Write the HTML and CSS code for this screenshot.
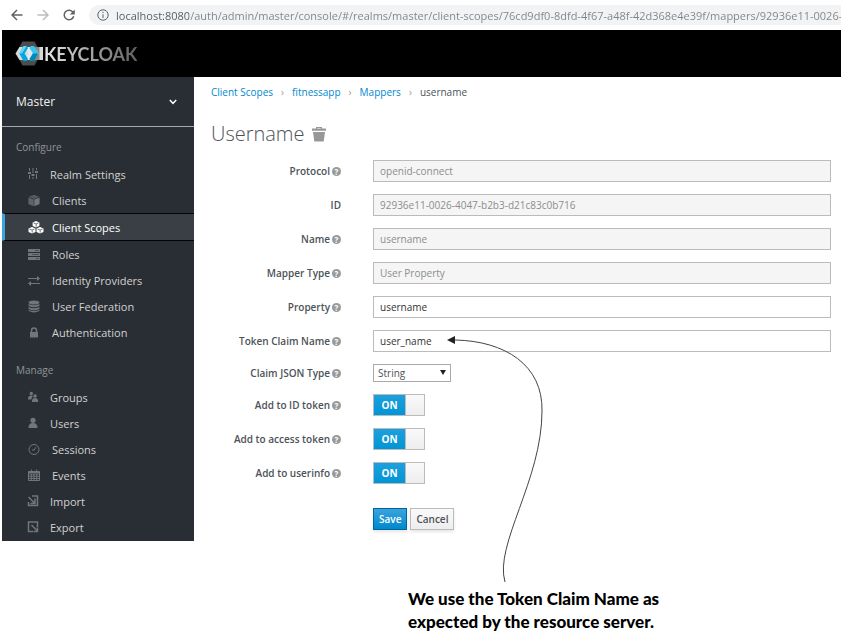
FILE: index.html
```html
<!DOCTYPE html>
<html lang="en">
  <head>
    <meta charset="UTF-8" />
    <meta name="viewport" content="width=device-width, initial-scale=1.0" />
    <title>Keycloak Admin Console</title>
    <link rel="stylesheet" href="styles.css" />
  </head>
  <body>
    <figure class="figure">
      <div class="browser-bar">
        <button class="nav-btn" type="button" aria-label="Back">
          <svg width="12" height="12" viewBox="0 0 12 12"><path d="M11.5 6H1.2M6 1L1 6l5 5" /></svg>
        </button>
        <button class="nav-btn muted" type="button" aria-label="Forward">
          <svg width="12" height="12" viewBox="0 0 12 12"><path d="M.5 6h10.3M6 1l5 5-5 5" /></svg>
        </button>
        <button class="nav-btn" type="button" aria-label="Reload">
          <svg width="12" height="12" viewBox="0 0 12 12"><path d="M10 3.2A4.8 4.8 0 1 0 10.7 7.2" /><path class="solid" d="M11.8.4v5H6.8z" /></svg>
        </button>
        <label class="address">
          <svg width="12" height="12" viewBox="0 0 12 12"><circle cx="6" cy="6" r="5.2" /><path d="M6 5.3V9M6 2.8v1.3" /></svg>
          <input class="url" type="text" aria-label="Address" readonly value="localhost:8080/auth/admin/master/console/#/realms/master/client-scopes/76cd9df0-8dfd-4f67-a48f-42d368e4e39f/mappers/92936e11-0026-4047-b2b3-d21c83c0b716" />
        </label>
      </div>

      <header class="masthead">
        <a class="brand" href="#">
          <svg width="29" height="25" viewBox="0 0 29 25">
            <path fill="#4d4d4d" d="M7.5.5h12l6.5 12-6.5 12h-12L1 12.5z" />
            <path fill="#d8d8d8" d="M4.5 6H28v13H4.5L.5 12.5z" />
            <path fill="#8a8a8a" d="M19 6h5.5v13H19l4.5-6.5z" />
            <path fill="#e6e6e6" d="M9.5 6h8l3.5 6.5-3.5 6.5h-8l3.5-6.5z" />
            <path fill="#00a8e1" d="M8.5 5h3.2l1.3 2-3.4 5.5L13 18l-1.300 2H8.500l-4.200-7.500z" />
            <path fill="#5fd5f7" d="M8.5 5h3.2L7 12.500H4.300z" />
            <path fill="#33c6f4" d="M19 5h-3.200l-1.300 2 3.400 5.500-3.400 5.500 1.300 2H19l4.200-7.500z" />
            <path fill="#0088b8" d="M17.900 12.500h5.300L19 20h-3.200l-1.300-2z" />
          </svg>
          <span class="brand-name">KEYCLOAK</span>
        </a>
      </header>

      <div class="console">
        <nav class="sidebar">
          <button class="realm" type="button">
            Master
            <svg width="8" height="6" viewBox="0 0 8 6"><path d="M.8 1L4 4.3 7.2 1" /></svg>
          </button>

          <h2>Configure</h2>
          <ul>
            <li>
              <a href="#">
                <svg class="pf" viewBox="0 0 10 12"><path d="M1 0h1v3H1zM0 4h3v2H0zM1 7h1v4H1zM4.5 0h1v5h-1zM3.500 6h3v2h-3zM4.500 9h1v2h-1zM8 0h1v2H8zM7 3h3v2H7zM8 6h1v5H8z" /></svg>
                Realm Settings
              </a>
            </li>
            <li>
              <a href="#">
                <svg viewBox="0 0 12 12"><path d="M6 .8l5.500 2L6 5 .5 2.800z" opacity=".6" /><path d="M.4 3.500l5.300 2.100v6.600L.4 9.900z" opacity=".75" /><path d="M11.600 3.500L6.300 5.600v6.600l5.300-2.300z" /></svg>
                Clients
              </a>
            </li>
            <li class="active">
              <a href="#">
                <svg viewBox="0 0 12 12"><path d="M8 0l3.400 1.400v3.500L8 6.500 4.600 4.900V1.400zM4 6l3.500 1.500v3.400L4 12.500.5 10.900V7.500zM12 6l3.500 1.500v3.400L12 12.500l-3.500-1.600V7.500z" /><path class="cube-lines" d="M5.500 1.900L8 3l2.500-1.100M8.200 3.200v2.500M1.500 8L4 9l2.500-1M4.200 9.200v2.500M9.500 8l2.500 1 2.500-1M12.200 9.200v2.500" /></svg>
                Client Scopes
              </a>
            </li>
            <li>
              <a href="#">
                <svg viewBox="0 0 12 12"><path d="M0 1h12v3H0zM0 5h12v3H0zM0 9h12v3H0z" /><path class="cut" d="M7 2.500h4M4 6.500h7M8 10.500h3" /></svg>
                Roles
              </a>
            </li>
            <li>
              <a href="#">
                <svg viewBox="0 0 12 12"><path d="M0 4h9V2l3 2.500L9 7V5H0zM12 9H3V7L0 9.500 3 12v-2h9z" /></svg>
                Identity Providers
              </a>
            </li>
            <li>
              <a href="#">
                <svg viewBox="0 0 12 12"><ellipse cx="6" cy="2.500" rx="5.500" ry="2" /><path d="M.5 4q5.500 2.400 11 0v1.800q-5.500 3-11 0zM.5 6.900q5.500 2.600 11 0v1.800q-5.500 3-11 0zM.5 9.800q5.500 2.600 11 0v1q-5.500 3.200-11 0z" /></svg>
                User Federation
              </a>
            </li>
            <li>
              <a href="#">
                <svg viewBox="0 0 12 12"><path fill-rule="evenodd" d="M2 6h.8V4.500a3.200 3.200 0 0 1 6.400 0V6h.8v5.500H2zM4.300 6h3.400V4.500a1.700 1.700 0 0 0-3.400 0z" /></svg>
                Authentication
              </a>
            </li>
          </ul>

          <h2>Manage</h2>
          <ul>
            <li>
              <a href="#">
                <svg class="pf" viewBox="0 0 10 12"><circle cx="3.300" cy="2.500" r="1.700" /><path d="M0 8.500q0-4 3-4 1.800 0 1.800 1.200Q3.300 6.600 3.300 8.500z" /><circle cx="7" cy="5" r="1.800" /><path d="M3.800 11q0-4 3.200-4t3.200 4z" /></svg>
                Groups
              </a>
            </li>
            <li>
              <a href="#">
                <svg class="pf" viewBox="0 0 10 12"><circle cx="5" cy="3.300" r="2.600" /><path d="M.5 11q0-5 4.500-5t4.500 5z" /></svg>
                Users
              </a>
            </li>
            <li>
              <a href="#">
                <svg class="line" viewBox="0 0 12 12"><circle cx="6" cy="6.500" r="5" /><path d="M7.800 4.300L6.200 7H4" /></svg>
                Sessions
              </a>
            </li>
            <li>
              <a href="#">
                <svg class="line" viewBox="0 0 12 12"><path d="M.5 2.500h11v9H.5zM.5 5h11M.5 7.200h11M.5 9.400h11M3.300 5v6.500M6 5v6.500M8.700 5v6.500M3.300.5v3M8.700.5v3M1 3.500h10" /></svg>
                Events
              </a>
            </li>
            <li>
              <a href="#">
                <svg class="pf line bold" viewBox="0 0 10 12"><path d="M4 1h5.500v9.500H.5V7M.5 2l5.500 5.500M7 3.500v5H2.500" /></svg>
                Import
              </a>
            </li>
            <li>
              <a href="#">
                <svg class="pf line bold" viewBox="0 0 10 12"><path d="M5 10.500H.5V1h9v5M3.500 4L9 9.500M9.500 6.500v4h-4" /></svg>
                Export
              </a>
            </li>
          </ul>
        </nav>

        <main class="content">
          <ol class="breadcrumb">
            <li><a href="#">Client Scopes</a></li>
            <li><a href="#">fitnessapp</a></li>
            <li><a href="#">Mappers</a></li>
            <li>username</li>
          </ol>

          <h1>
            Username
            <button class="trash" type="button" aria-label="Delete">
              <svg width="14" height="16" viewBox="0 0 14 16"><path fill-rule="evenodd" d="M4 1h6v1.500h4v2.300H0V2.500h4zM5.200 2v.5h3.600V2z" /><path d="M1 6h12l-1.300 9.500H2.300z" /></svg>
            </button>
          </h1>

          <form class="mapper-form">
            <div class="row">
              <label for="protocol">Protocol <span class="help"></span></label>
              <input id="protocol" type="text" value="openid-connect" disabled />
            </div>
            <div class="row">
              <label for="mapper-id">ID</label>
              <input id="mapper-id" type="text" value="92936e11-0026-4047-b2b3-d21c83c0b716" disabled />
            </div>
            <div class="row">
              <label for="name">Name <span class="help"></span></label>
              <input id="name" type="text" value="username" disabled />
            </div>
            <div class="row">
              <label for="mapper-type">Mapper Type <span class="help"></span></label>
              <input id="mapper-type" type="text" value="User Property" disabled />
            </div>
            <div class="row">
              <label for="property">Property <span class="help"></span></label>
              <input id="property" type="text" value="username" />
            </div>
            <div class="row">
              <label for="claim-name">Token Claim Name <span class="help"></span></label>
              <input id="claim-name" type="text" value="user_name" />
            </div>
            <div class="row">
              <label for="claim-type">Claim JSON Type <span class="help"></span></label>
              <div class="select">
                <select id="claim-type">
                  <option>String</option>
                </select>
              </div>
            </div>
            <div class="row">
              <label for="id-token">Add to ID token <span class="help"></span></label>
              <div class="onoff">
                <input id="id-token" type="checkbox" checked />
                <span class="on">ON</span>
              </div>
            </div>
            <div class="row">
              <label for="access-token">Add to access token <span class="help"></span></label>
              <div class="onoff">
                <input id="access-token" type="checkbox" checked />
                <span class="on">ON</span>
              </div>
            </div>
            <div class="row">
              <label for="userinfo">Add to userinfo <span class="help"></span></label>
              <div class="onoff">
                <input id="userinfo" type="checkbox" checked />
                <span class="on">ON</span>
              </div>
            </div>
            <div class="actions">
              <button class="btn primary" type="submit">Save</button>
              <button class="btn" type="button">Cancel</button>
            </div>
          </form>
        </main>
      </div>

      <!-- Callout arrow from the caption to the claim name field -->
      <svg class="callout-arrow" width="100" height="250" viewBox="0 0 100 250">
        <path class="curve" d="M59 248C48 211 96 146 96 77C97 31 59 7 9 6" />
        <path d="M1 6l8-4v8z" />
      </svg>

      <figcaption>
        We use the Token Claim Name as<br />
        expected by the resource server.
      </figcaption>
    </figure>
  </body>
</html>
```
FILE: styles.css
```css
* {
  margin: 0;
  padding: 0;
  box-sizing: border-box;
}
body {
  background-color: #fff;
  color: #4d5258;
  font-family: "Open Sans", "Noto Sans", sans-serif;
  font-size: 10px;
}
button,
input,
select {
  font: inherit;
  color: inherit;
}
a {
  text-decoration: none;
}
ul,
ol {
  list-style: none;
}
.figure {
  position: relative;
  padding: 0 12px 0 2px;
}

/* browser toolbar */
.browser-bar {
  display: flex;
  align-items: center;
  height: 30px;
  padding-left: 9px;
  gap: 14px;
}
.nav-btn {
  display: flex;
  border: none;
  background: none;
}
.nav-btn svg,
.address svg {
  fill: none;
  stroke: #5f6368;
  stroke-width: 1.5;
}
.nav-btn .solid {
  fill: #5f6368;
  stroke: none;
}
.nav-btn.muted svg {
  stroke: #bbbdbf;
}
.address {
  flex: 1;
  min-width: 0;
  display: flex;
  align-items: center;
  gap: 7px;
  height: 20px;
  padding-left: 8px;
  border-radius: 10px 0 0 10px;
  background-color: #f1f3f4;
}
.address svg {
  flex: none;
  stroke-width: 1;
}
.url {
  flex: 1;
  min-width: 0;
  border: none;
  outline: none;
  font-size: 11px;
  color: transparent;
  background: linear-gradient(90deg, #55585c 73px, #808285 73px);
  background-clip: text;
  -webkit-background-clip: text;
}

.masthead {
  display: flex;
  align-items: center;
  height: 47px;
  padding-left: 13px;
  background-color: #000;
}
.brand {
  display: flex;
  align-items: center;
}
.brand-name {
  font-family: Lato, sans-serif;
  font-size: 18px;
  font-weight: bold;
  color: transparent;
  background: linear-gradient(90deg, #e8e8e8, #606060);
  background-clip: text;
  -webkit-background-clip: text;
}

.console {
  display: flex;
}
.sidebar {
  width: 192px;
  padding-bottom: 1px;
  background-color: #292e34;
  color: #d1d1d1;
  font-size: 11px;
}
.realm {
  display: flex;
  align-items: center;
  justify-content: space-between;
  width: 100%;
  height: 50px;
  padding: 0 17px 0 14px;
  border: none;
  border-bottom: 1px solid #a5a7aa;
  background: none;
  color: #f1f1f1;
  font-size: 12px;
}
.realm svg {
  fill: none;
  stroke: #fff;
  stroke-width: 1.5;
}
.sidebar h2 {
  padding: 10px 14px 4px;
  color: #8f9499;
  font-size: 10px;
  font-weight: normal;
  line-height: 20px;
}
.sidebar ul + h2 {
  padding-top: 15px;
}
.sidebar li {
  border-left: 3px solid transparent;
}
.sidebar li a {
  display: flex;
  align-items: center;
  gap: 12px;
  height: 26px;
  padding-left: 23px;
  color: inherit;
}
.sidebar li svg {
  width: 12px;
  height: 12px;
  overflow: visible;
  fill: #72767b;
}
.sidebar li .pf {
  width: 10px;
}
.sidebar li .line {
  fill: none;
  stroke: #72767b;
}
.sidebar li .bold {
  stroke-width: 1.5;
}
.sidebar .cut {
  stroke: #4b4f54;
}
.sidebar .active {
  border-top: 1px solid #030303;
  border-bottom: 1px solid #030303;
  border-left-color: #39a5dc;
  background-color: #393f44;
  color: #fff;
}
.sidebar .active svg {
  fill: #fff;
}
.cube-lines {
  fill: none;
  stroke: #393f44;
  stroke-width: 0.7;
}

.content {
  flex: 1;
  min-width: 0;
  padding: 8px 10px 0 17px;
}
.breadcrumb {
  display: flex;
  line-height: 14px;
}
.breadcrumb a {
  color: #0088ce;
}
.breadcrumb li + li::before {
  content: "›";
  padding: 0 8px;
  color: #9c9c9c;
}
h1 {
  display: flex;
  align-items: center;
  gap: 7px;
  margin: 22px 0 13px;
  font-size: 20px;
  font-weight: 300;
  line-height: 26px;
}
.trash {
  display: flex;
  border: none;
  background: none;
}
.trash svg {
  fill: #959799;
}

.mapper-form {
  display: flex;
  flex-direction: column;
  gap: 12px;
}
.row {
  display: grid;
  grid-template-columns: 130px 1fr;
  column-gap: 32px;
  align-items: center;
}
.row > label {
  display: flex;
  align-items: center;
  justify-content: flex-end;
  gap: 2px;
  font-weight: 600;
  line-height: 14px;
  white-space: nowrap;
}
.help {
  width: 9px;
  height: 9px;
  border-radius: 50%;
  background-color: #999;
  color: #fff;
  font-size: 8px;
  font-weight: bold;
  line-height: 9px;
  text-align: center;
}
.help::before {
  content: "?";
}
.row > input {
  width: 100%;
  height: 22px;
  padding: 0 6px;
  border: 1px solid #bbb;
  color: #333;
}
.row > input:disabled {
  background-color: #f5f5f5;
  color: #8b8d8f;
}
.select {
  position: relative;
  width: 78px;
}
.select::after {
  content: "";
  position: absolute;
  top: 6px;
  right: 5px;
  border: 3px solid transparent;
  border-top: 5px solid #222;
  border-bottom: none;
  pointer-events: none;
}
.select select {
  display: block;
  appearance: none;
  width: 100%;
  height: 18px;
  padding: 0 4px;
  border: 1px solid #aaa;
  background-color: #fff;
}
.onoff {
  position: relative;
  width: 52px;
  height: 22px;
}
.onoff input {
  display: block;
  appearance: none;
  width: 100%;
  height: 100%;
  border: 1px solid #bbb;
  background: linear-gradient(#fafafa, #ededed);
}
.onoff .on {
  position: absolute;
  top: 1px;
  left: 1px;
  width: 32px;
  border-right: 1px solid #bbb;
  background: linear-gradient(#1f9fdd, #0095d6);
  color: #fff;
  font-weight: bold;
  line-height: 20px;
  text-align: center;
  pointer-events: none;
}
.actions {
  display: flex;
  gap: 3px;
  padding: 12px 0 0 162px;
}
.btn {
  height: 22px;
  padding: 0 5px;
  border: 1px solid #bbb;
  background: linear-gradient(#fafafa, #ededed);
  box-shadow: 0 2px 3px rgba(3, 3, 3, 0.1);
  font-weight: 600;
}
.btn.primary {
  border-color: #00659c;
  background: linear-gradient(#39a5dc, #0088ce);
  color: #fff;
}

.callout-arrow {
  position: absolute;
  top: 334px;
  left: 446px;
  fill: #222;
  pointer-events: none;
}
.callout-arrow .curve {
  fill: none;
  stroke: #444;
}
figcaption {
  padding: 46px 0 0 406px;
  color: #000;
  font-family: Lato, sans-serif;
  font-size: 17px;
  font-weight: 900;
  line-height: 23px;
}
```
